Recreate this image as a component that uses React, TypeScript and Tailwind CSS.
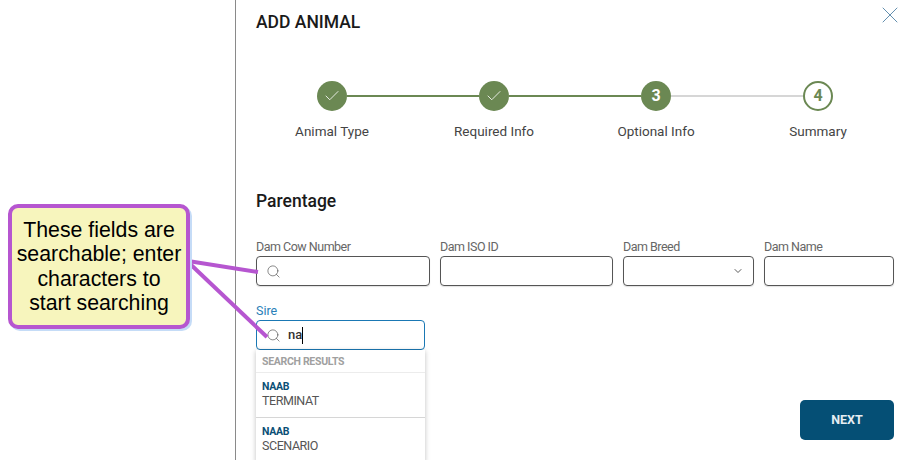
import { Check, ChevronDown, Search, X } from "lucide-react";

const steps = ["Animal Type", "Required Info", "Optional Info", "Summary"];

function DoneStep() {
  return (
    <div className="flex h-[30px] w-[30px] shrink-0 items-center justify-center rounded-full bg-[#6b8853] text-white">
      <Check size={18} strokeWidth={1.1} />
    </div>
  );
}

function Field({ label, width, search, chevron }: { label: string; width: string; search?: boolean; chevron?: boolean }) {
  return (
    <div className={width}>
      <label className="block h-[17px] text-[12.5px] leading-[17px] tracking-[-0.5px] text-[#666666]">{label}</label>
      <div className="mt-[1px] flex h-[30px] items-center justify-between rounded-[4px] border border-[#555555] px-[9px] shadow-[0_1px_1px_rgba(0,0,0,0.12)]">
        {search && <Search size={15} strokeWidth={1} className="text-[#444444]" />}
        {chevron && <ChevronDown size={12} strokeWidth={1.75} className="ml-auto text-[#444444]" />}
      </div>
    </div>
  );
}

function Result({ name }: { name: string }) {
  return (
    <div className="h-[45px] border-b border-[#d6d6d6] px-[6px] pt-[7px]">
      <div className="text-[10.5px] font-bold leading-[13px] tracking-[-0.3px] text-[#0b4f75]">NAAB</div>
      <div className="text-[12.5px] leading-[15px] tracking-[-0.45px] text-[#555555]">{name}</div>
    </div>
  );
}

export default function App() {
  return (
    <div className="relative flex h-[460px] w-[911px] overflow-hidden bg-white font-['Roboto',sans-serif]">
      <div className="w-[235px] shrink-0" />

      <main className="relative min-w-0 flex-1 border-l border-[#8a8a8a] pl-[20px] pr-[17px]">
        <h1 className="mt-[12px] text-[17.5px] font-medium leading-[20px] text-[#1a1a1a]">ADD ANIMAL</h1>
        <button className="absolute right-[7px] top-[1px] text-[#1f5f8b]">
          <X size={28} strokeWidth={0.6} />
        </button>

        {/* stepper */}
        <div className="mt-[49px] flex items-center pl-[61px]">
          <DoneStep />
          <div className="h-[2px] w-[132px] bg-[#6b8853]" />
          <DoneStep />
          <div className="h-[2px] w-[132px] bg-[#6b8853]" />
          <div className="flex h-[30px] w-[30px] shrink-0 items-center justify-center rounded-full bg-[#6b8853] text-[16px] font-bold text-white">3</div>
          <div className="h-[2px] w-[132px] bg-[#d6d6d6]" />
          <div className="flex h-[30px] w-[30px] shrink-0 items-center justify-center rounded-full border-2 border-[#6b8853] text-[16px] font-bold text-[#6b8853]">4</div>
        </div>
        <div className="ml-[-5px] mt-[10px] grid w-[648px] grid-cols-4 text-center text-[13.5px] leading-[20px] text-[#444444]">
          {steps.map((step) => (
            <div key={step}>{step}</div>
          ))}
        </div>

        <h2 className="mt-[49px] text-[17.5px] font-medium leading-[22px] text-[#1a1a1a]">Parentage</h2>

        <div className="mt-[26px] flex gap-[10px]">
          <Field label="Dam Cow Number" width="w-[174px]" search />
          <Field label="Dam ISO ID" width="w-[173px]" />
          <Field label="Dam Breed" width="w-[131px]" chevron />
          <Field label="Dam Name" width="w-[130px]" />
        </div>

        <div className="mt-[16px] w-[169px]">
          <label className="block h-[17px] text-[12.5px] leading-[17px] text-[#2a7fb8]">Sire</label>
          <div className="mt-[1px] flex h-[30px] items-center rounded-[4px] border border-[#1a78b4] px-[9px]">
            <Search size={15} strokeWidth={1} className="text-[#444444]" />
            <span className="ml-[7px] text-[13px] font-medium text-[#333333]">na</span>
            <span className="h-[17px] w-px bg-black" />
          </div>
          <div className="shadow-[0_1px_5px_rgba(0,0,0,0.25)]">
            <div className="h-[23px] border-b border-[#ececec] px-[6px] pt-[5px] text-[10.5px] font-bold leading-[13px] tracking-[-0.3px] text-[#a0a0a0]">
              SEARCH RESULTS
            </div>
            <Result name="TERMINAT" />
            <Result name="SCENARIO" />
          </div>
        </div>

        <button className="absolute right-[17px] top-[400px] h-[40px] w-[94px] rounded-[5px] bg-[#054f75] text-[12.5px] font-bold text-[#e6eef3]">
          NEXT
        </button>
      </main>

      {/* callout over the form */}
      <svg className="pointer-events-none absolute left-0 top-0" width="911" height="460">
        <path d="M188 261 L258 272" stroke="#b656d0" strokeWidth="4" fill="none" />
        <path d="M188 262 L267 337" stroke="#b656d0" strokeWidth="4" fill="none" />
      </svg>
      <div className="absolute left-[8px] top-[204px] flex h-[125px] w-[182px] items-center justify-center rounded-[10px] border-[4px] border-[#b656d0] bg-[#f7f5bd] text-center font-['Liberation_Sans',sans-serif] text-[21.3px] leading-[24.5px] text-black shadow-[2px_2px_0_#c5dcf7]">
        <div>
          These fields are
          <br />
          searchable; enter
          <br />
          characters to
          <br />
          start searching
        </div>
      </div>
    </div>
  );
}
